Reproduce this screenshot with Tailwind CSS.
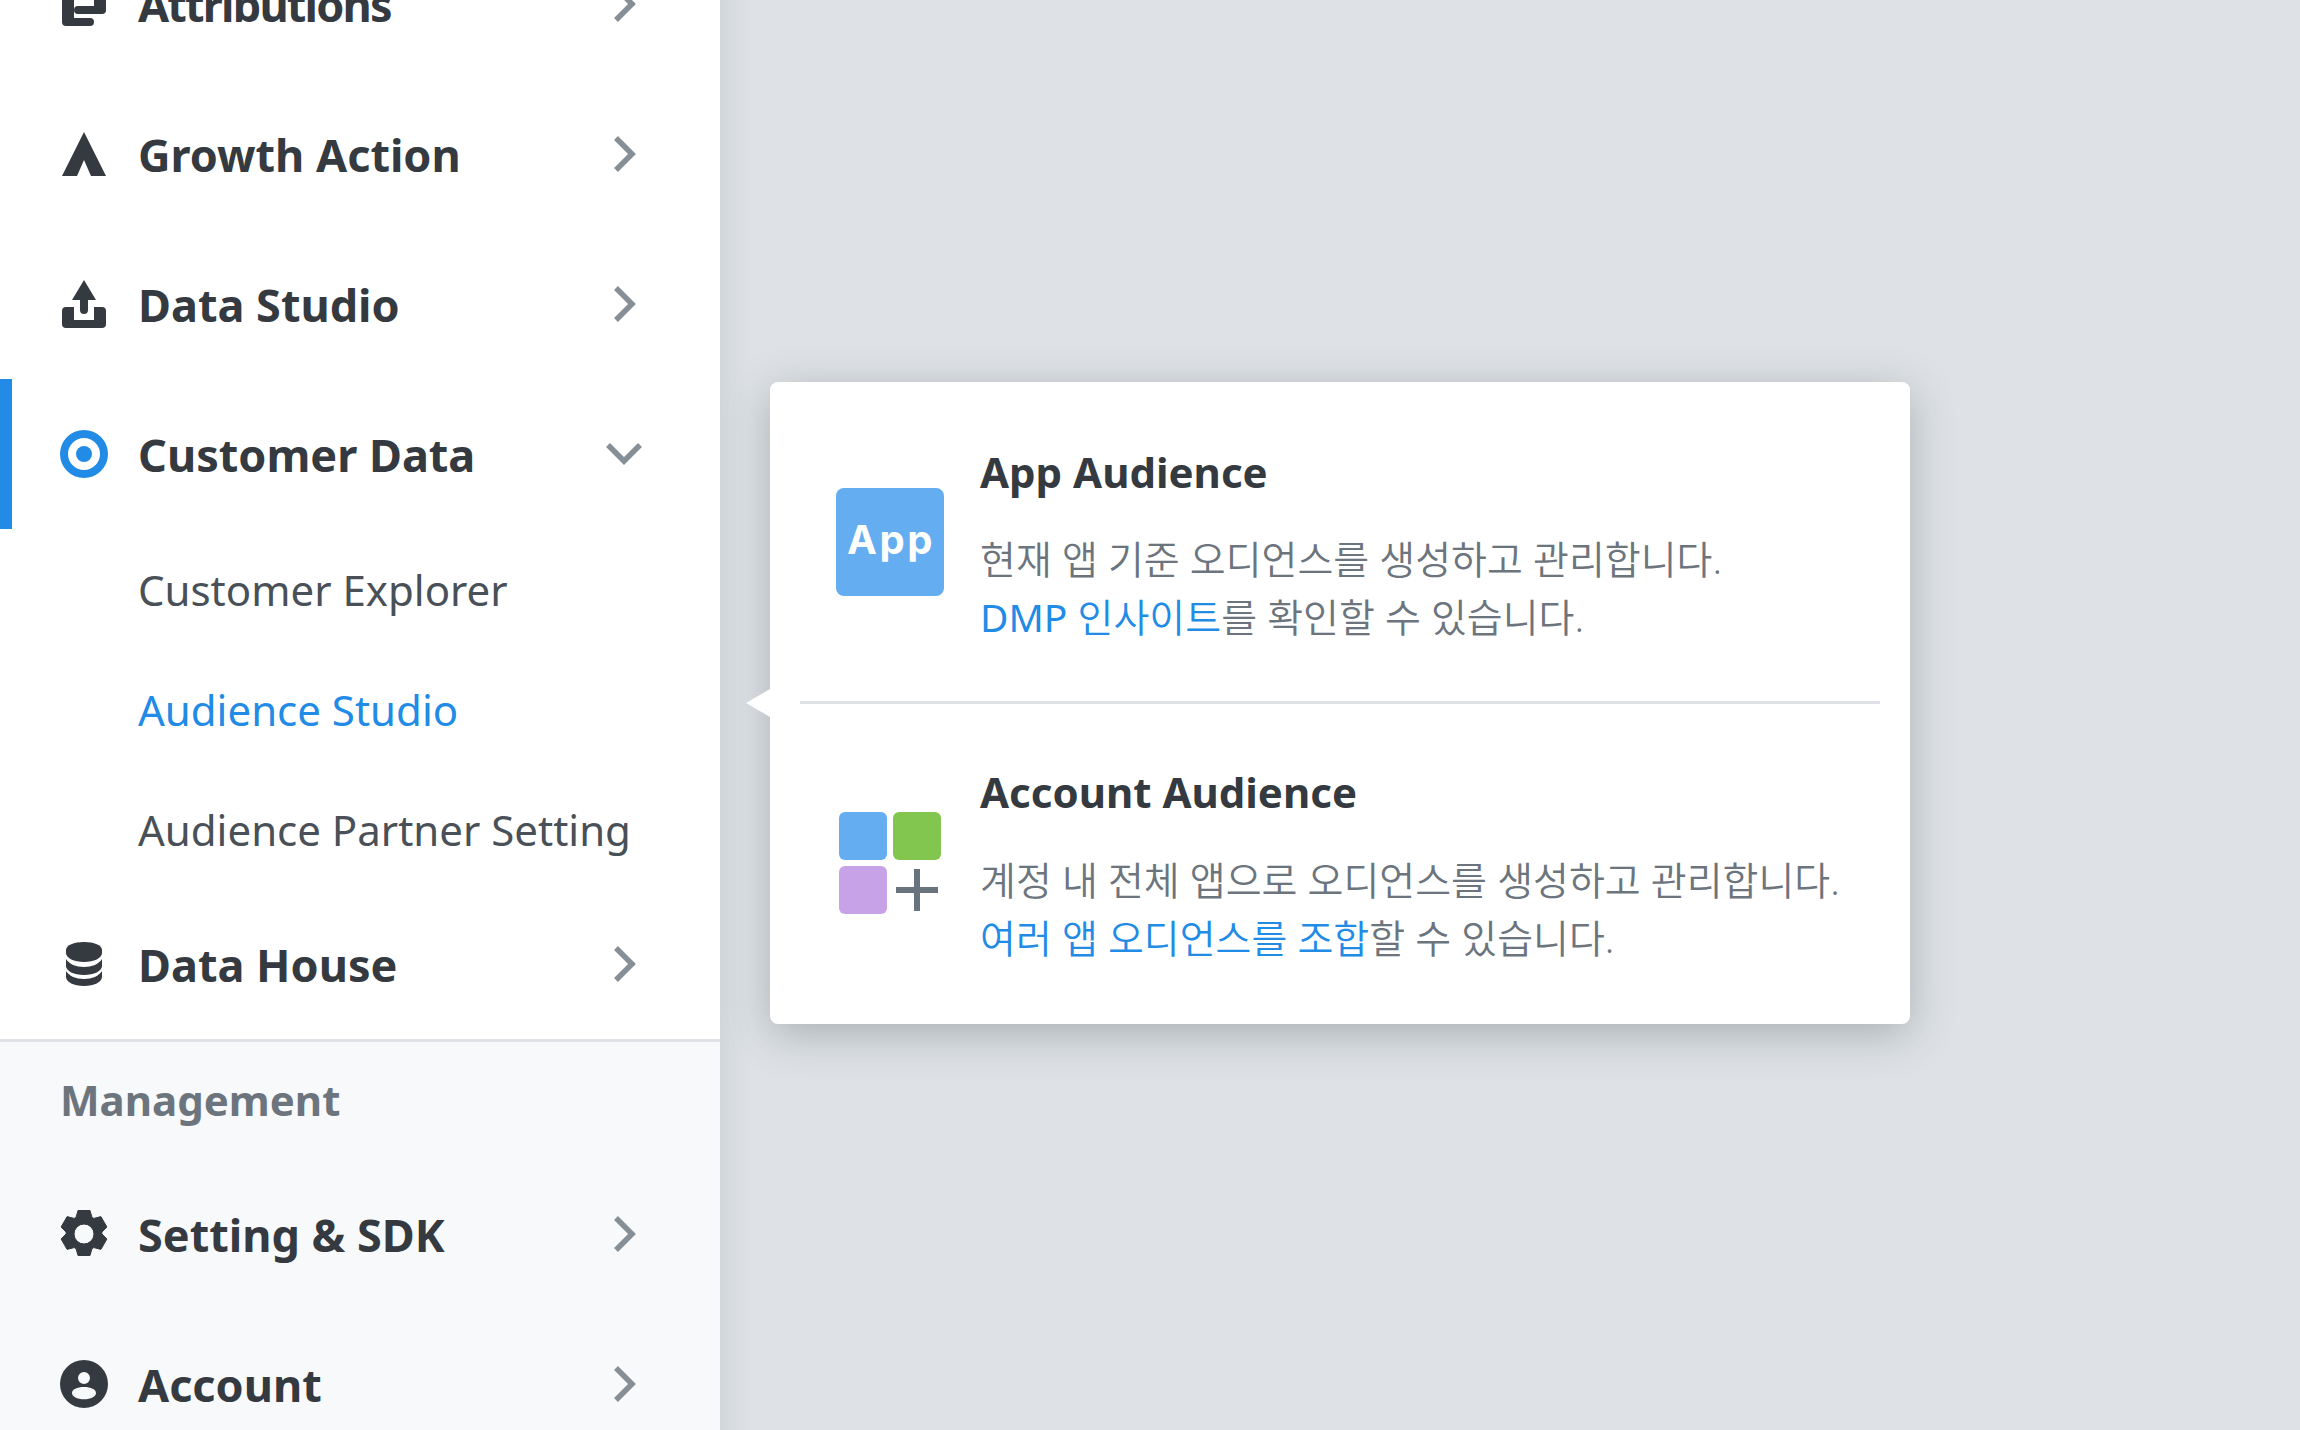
<!DOCTYPE html>
<html lang="en">
<head>
<meta charset="UTF-8">
<title>Customer Data</title>
<script src="https://cdn.jsdelivr.net/npm/@tailwindcss/browser@4"></script>
</head>
<body class="flex items-start h-[1430px] overflow-hidden bg-[#dee2e6] font-['Noto_Sans','Noto_Sans_CJK_KR',sans-serif]">
  <!-- sidebar -->
  <aside class="relative w-[720px] shrink-0 -mt-[71px] flex flex-col bg-white shadow-[0_0_30px_rgba(52,58,64,0.15)]">
    <a class="h-[150px] flex items-center pl-[62px] pr-[84px] text-[#343a40]">
      <svg class="w-[44px] h-[44px]" viewBox="0 0 44 44" fill="currentColor"><path d="M4 6h24a4 4 0 0 1 0 8H12v22h16a4 4 0 0 1 0 8H4a4 4 0 0 1-4-4V10a4 4 0 0 1 4-4z"/><path d="M32 0h12v28a4 4 0 0 1-4 4H16a4 4 0 0 1 0-8h16z"/></svg>
      <span class="ml-[32px] mt-[2px] text-[45px] font-bold tracking-[-1.8px] flex-1">Attributions</span>
      <svg class="w-[22px] h-[36px] text-[#868e96]" viewBox="0 0 22 36" fill="none" stroke="currentColor" stroke-width="5.5"><path d="M2 2l16 16L2 34"/></svg>
    </a>
    <a class="h-[150px] flex items-center pl-[62px] pr-[84px] text-[#343a40]">
      <svg class="w-[44px] h-[44px]" viewBox="0 0 44 44" fill="currentColor"><path d="M22 0l22 44H29l-7-16-7 16H0z"/></svg>
      <span class="ml-[32px] mt-[2px] text-[45px] font-bold flex-1">Growth Action</span>
      <svg class="w-[22px] h-[36px] text-[#868e96]" viewBox="0 0 22 36" fill="none" stroke="currentColor" stroke-width="5.5"><path d="M2 2l16 16L2 34"/></svg>
    </a>
    <a class="h-[150px] flex items-center pl-[62px] pr-[84px] text-[#343a40]">
      <svg class="w-[44px] h-[48px]" viewBox="0 0 44 48" fill="currentColor"><path d="M22 0l12 20h-8v10a4 4 0 0 1-8 0V20h-8z"/><path d="M0 31a4 4 0 0 1 4-4h8v13h20V27h8a4 4 0 0 1 4 4v13a4 4 0 0 1-4 4H4a4 4 0 0 1-4-4z"/></svg>
      <span class="ml-[32px] mt-[2px] text-[45px] font-bold flex-1">Data Studio</span>
      <svg class="w-[22px] h-[36px] text-[#868e96]" viewBox="0 0 22 36" fill="none" stroke="currentColor" stroke-width="5.5"><path d="M2 2l16 16L2 34"/></svg>
    </a>
    <a class="h-[150px] flex items-center pl-[48px] pr-[78px] text-[#343a40] border-l-[12px] border-[#228be6]">
      <svg class="w-[48px] h-[48px] text-[#228be6]" viewBox="0 0 48 48" fill="currentColor"><path fill-rule="evenodd" d="M24 0a24 24 0 1 0 0 48 24 24 0 0 0 0-48zm0 8a16 16 0 1 1 0 32 16 16 0 0 1 0-32z"/><circle cx="24" cy="24" r="8"/></svg>
      <span class="ml-[30px] mt-[2px] text-[45px] font-bold flex-1">Customer Data</span>
      <svg class="w-[36px] h-[22px] text-[#868e96]" viewBox="0 0 36 22" fill="none" stroke="currentColor" stroke-width="5.5"><path d="M2 2l16 16L34 2"/></svg>
    </a>
    <div class="flex flex-col text-[42px] text-[#495057]">
      <a class="h-[120px] flex items-center pl-[138px]">Customer Explorer</a>
      <a class="h-[120px] flex items-center pl-[138px] text-[#228be6]">Audience Studio</a>
      <a class="h-[120px] flex items-center pl-[138px]">Audience Partner Setting</a>
    </div>
    <a class="h-[150px] flex items-center pl-[66px] pr-[84px] text-[#343a40]">
      <svg class="w-[36px] h-[44px]" viewBox="0 0 36 44" fill="currentColor"><path d="M0 8C0 3 8 0 18 0s18 3 18 8v3c0 5-8 9-18 9S0 16 0 11z"/><path d="M0 17c3 5 10 8 18 8s15-3 18-8v7c0 5-8 9-18 9S0 29 0 24z"/><path d="M0 29c3 5 10 8 18 8s15-3 18-8v6c0 5-8 9-18 9S0 40 0 35z"/></svg>
      <span class="ml-[36px] mt-[2px] text-[45px] font-bold flex-1">Data House</span>
      <svg class="w-[22px] h-[36px] text-[#868e96]" viewBox="0 0 22 36" fill="none" stroke="currentColor" stroke-width="5.5"><path d="M2 2l16 16L2 34"/></svg>
    </a>
    <div class="bg-[#f8f9fa] border-t-[3px] border-[#dee2e6]">
      <div class="h-[114px] mb-[3px] flex items-center pl-[60px] text-[42px] font-bold text-[#6c757d]">Management</div>
      <a class="h-[150px] flex items-center pl-[60px] pr-[84px] text-[#343a40]">
        <svg class="w-[48px] h-[48px]" viewBox="0 0 48 48" fill="currentColor"><path fill-rule="evenodd" stroke="currentColor" stroke-width="1" stroke-linejoin="round" d="M18 .5h12l2 7 1.900.9 7-1.800 6 10.400-5 5.100v1.800l5 5.100-6 10.400-7-1.800-1.900.9-2 7H18l-2-7-1.900-.9-7 1.800-6-10.400 5-5.100v-1.800l-5-5.100 6-10.400 7 1.800 1.900-.9zM24 14a10 10 0 1 0 0 20 10 10 0 0 0 0-20z"/></svg>
        <span class="ml-[30px] mt-[2px] text-[45px] font-bold flex-1">Setting &amp; SDK</span>
        <svg class="w-[22px] h-[36px] text-[#868e96]" viewBox="0 0 22 36" fill="none" stroke="currentColor" stroke-width="5.5"><path d="M2 2l16 16L2 34"/></svg>
      </a>
      <a class="h-[150px] flex items-center pl-[60px] pr-[84px] text-[#343a40]">
        <svg class="w-[48px] h-[48px]" viewBox="0 0 48 48" fill="currentColor"><path fill-rule="evenodd" d="M24 0a24 24 0 1 0 0 48 24 24 0 0 0 0-48zm0 12a6 6 0 1 1 0 12 6 6 0 0 1 0-12zm0 15c7 0 12 2.500 12 6s-5 6.300-12 6.300-12-2.800-12-6.300 5-6 12-6z"/></svg>
        <span class="ml-[30px] mt-[2px] text-[45px] font-bold flex-1">Account</span>
        <svg class="w-[22px] h-[36px] text-[#868e96]" viewBox="0 0 22 36" fill="none" stroke="currentColor" stroke-width="5.5"><path d="M2 2l16 16L2 34"/></svg>
      </a>
    </div>
  </aside>

  <!-- popover -->
  <main class="relative flex-1 pl-[50px] pt-[382px]">
    <div class="relative w-[1140px] h-[642px] bg-white rounded-[8px] shadow-[0_10px_44px_rgba(52,58,64,0.3)] flex flex-col px-[30px]">
      <div class="absolute -left-[24px] top-[307px] w-0 h-0 border-y-[14px] border-y-transparent border-r-[24px] border-r-white"></div>
      <div class="h-[322px] flex items-center pl-[36px] border-b-[3px] border-[#dee2e6]">
        <div class="w-[108px] h-[108px] pb-[3px] pl-[2px] rounded-[8px] bg-[#64adf0] flex items-center justify-center text-white text-[40px] font-bold tracking-[2.5px] font-['Inter',sans-serif]">App</div>
        <div class="ml-[36px] mt-[2px]">
          <div class="text-[42px] font-bold text-[#343a40]">App Audience</div>
          <p class="mt-[27px] text-[39px] font-[350] leading-[58px] text-[#6c757d]">현재 앱 기준 오디언스를 생성하고 관리합니다.<br><span class="text-[#228be6]"><span class="font-normal">DMP</span> 인사이트</span>를 확인할 수 있습니다.</p>
        </div>
      </div>
      <div class="flex-1 flex items-center pl-[39px]">
        <div class="w-[102px] -mt-[3px] grid grid-cols-2 gap-[6px]">
          <div class="h-[48px] rounded-[6px] bg-[#64adf0]"></div>
          <div class="h-[48px] rounded-[6px] bg-[#82c650]"></div>
          <div class="h-[48px] rounded-[6px] bg-[#c8a2e6]"></div>
          <svg class="w-[48px] h-[48px] text-[#68737d]" viewBox="0 0 48 48" fill="currentColor"><path d="M21 3h6v18h18v6H27v18h-6V27H3v-6h18z"/></svg>
        </div>
        <div class="ml-[39px] -mt-[1px]">
          <div class="text-[42px] font-bold text-[#343a40]">Account Audience</div>
          <p class="mt-[28px] text-[39px] font-[350] leading-[58px] text-[#6c757d]">계정 내 전체 앱으로 오디언스를 생성하고 관리합니다.<br><span class="text-[#228be6]">여러 앱 오디언스를 조합</span>할 수 있습니다.</p>
        </div>
      </div>
    </div>
  </main>
</body>
</html>
